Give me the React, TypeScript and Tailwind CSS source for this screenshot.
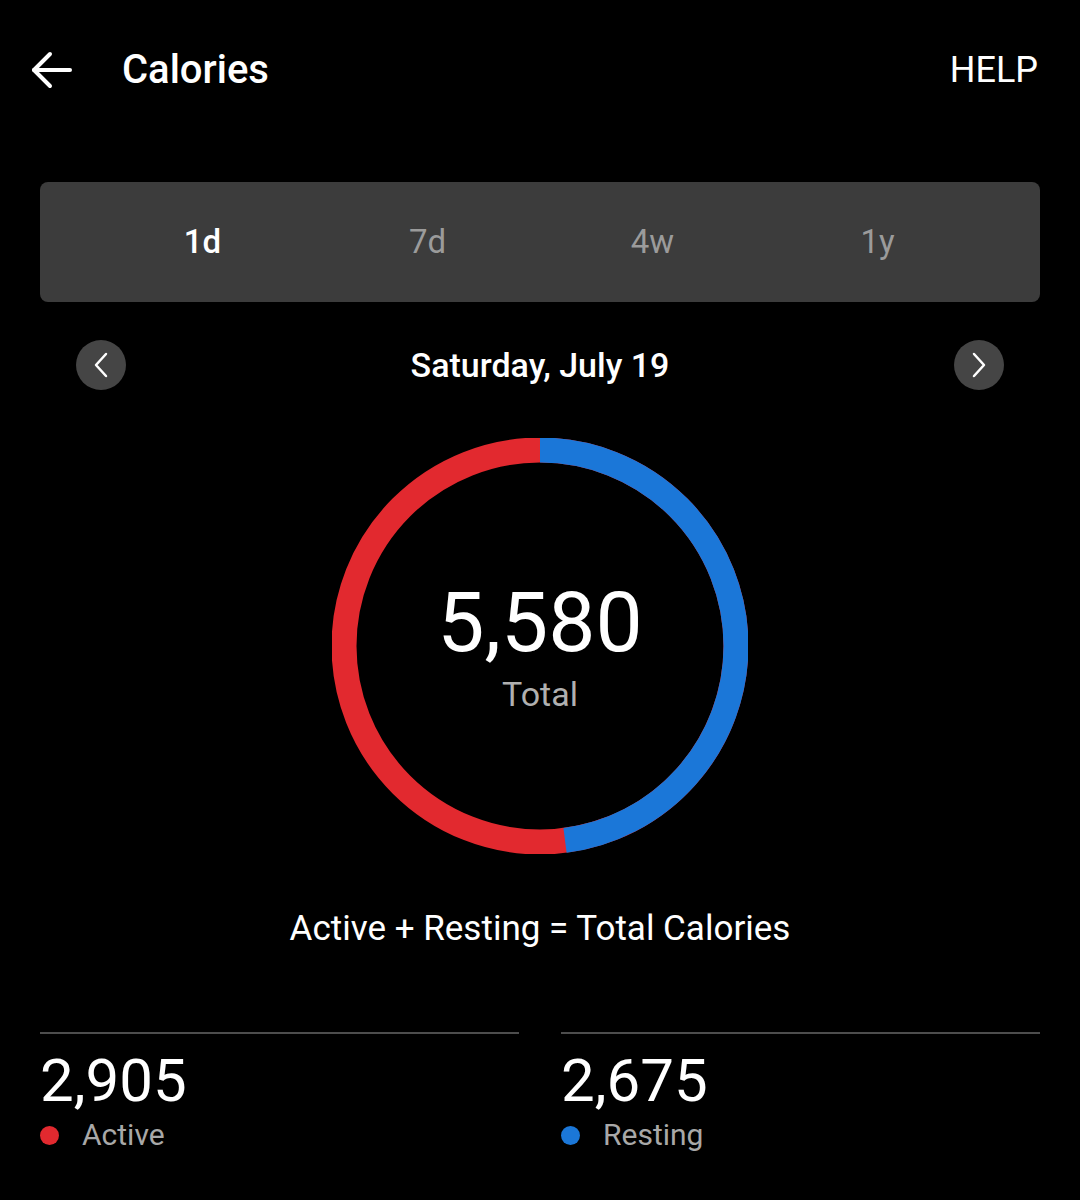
export default function App() {
  const active = 2905;
  const resting = 2675;
  const total = active + resting;
  const r = 196;
  const circ = 2 * Math.PI * r;
  const blueLen = (resting / total) * circ;

  const tabs = ['1d', '7d', '4w', '1y'];

  return (
    <div className="w-[1080px] h-[1200px] bg-black text-white overflow-hidden" style={{ fontFamily: 'Roboto, "Noto Sans", sans-serif' }}>
      {/* Header */}
      <div className="h-[140px] flex items-center pl-[30px] pr-[42px]">
        <svg width="44" height="40" viewBox="0 0 44 40" fill="none" stroke="white" strokeWidth="4" strokeLinecap="round" strokeLinejoin="round">
          <path d="M40 20H4" />
          <path d="M20 4L4 20L20 36" />
        </svg>
        <div className="ml-[48px] text-[40px] font-medium leading-none">Calories</div>
        <div className="ml-auto text-[36px] leading-none">HELP</div>
      </div>

      {/* Range selector */}
      <div className="mt-[42px] mx-[40px] h-[120px] rounded-[8px] bg-[#3c3c3c] px-[50px] grid grid-cols-4 items-center">
        {tabs.map((t, i) => (
          <div
            key={t}
            className={
              i === 0
                ? 'text-center text-[33px] font-medium text-white'
                : 'text-center text-[33px] text-[#9b9b9b]'
            }
          >
            {t}
          </div>
        ))}
      </div>

      {/* Date navigation */}
      <div className="mt-[38px] mx-[76px] h-[50px] flex items-center justify-between">
        <div className="w-[50px] h-[50px] rounded-full bg-[#454545] flex items-center justify-center">
          <svg width="16" height="26" viewBox="0 0 16 26" fill="none" stroke="white" strokeWidth="2.5" strokeLinecap="round" strokeLinejoin="round">
            <path d="M13 2L3 13L13 24" />
          </svg>
        </div>
        <div className="text-[34px] font-medium leading-none">Saturday, July 19</div>
        <div className="w-[50px] h-[50px] rounded-full bg-[#454545] flex items-center justify-center">
          <svg width="16" height="26" viewBox="0 0 16 26" fill="none" stroke="white" strokeWidth="2.5" strokeLinecap="round" strokeLinejoin="round">
            <path d="M3 2L13 13L3 24" />
          </svg>
        </div>
      </div>

      {/* Ring */}
      <div className="mt-[48px] flex justify-center">
        <div className="relative w-[416px] h-[416px]">
          <svg width="416" height="416" viewBox="0 0 416 416">
            <circle cx="208" cy="208" r={r} fill="none" stroke="#e2292f" strokeWidth="25" />
            <circle
              cx="208"
              cy="208"
              r={r}
              fill="none"
              stroke="#1b77d8"
              strokeWidth="25"
              strokeDasharray={`${blueLen} ${circ}`}
              transform="rotate(-90 208 208)"
            />
          </svg>
          <div className="absolute inset-0 flex flex-col items-center justify-center">
            <div className="text-[84px] leading-none">5,580</div>
            <div className="text-[34px] leading-none text-[#b0b0b0] mt-[12px]">Total</div>
          </div>
        </div>
      </div>

      {/* Formula */}
      <div className="mt-[57px] text-center text-[35px] leading-none">Active + Resting = Total Calories</div>

      {/* Breakdown */}
      <div className="mt-[86px] mx-[40px] grid grid-cols-2 gap-[42px]">
        <div className="border-t-2 border-[#4d4d4d] pt-[17px]">
          <div className="text-[60px] leading-none">2,905</div>
          <div className="mt-[9px] flex items-center">
            <span className="w-[19px] h-[19px] rounded-full bg-[#e2292f]" />
            <span className="ml-[23px] text-[30px] leading-none text-[#a8a8a8]">Active</span>
          </div>
        </div>
        <div className="border-t-2 border-[#4d4d4d] pt-[17px]">
          <div className="text-[60px] leading-none">2,675</div>
          <div className="mt-[9px] flex items-center">
            <span className="w-[19px] h-[19px] rounded-full bg-[#1b77d8]" />
            <span className="ml-[23px] text-[30px] leading-none text-[#a8a8a8]">Resting</span>
          </div>
        </div>
      </div>
    </div>
  );
}
